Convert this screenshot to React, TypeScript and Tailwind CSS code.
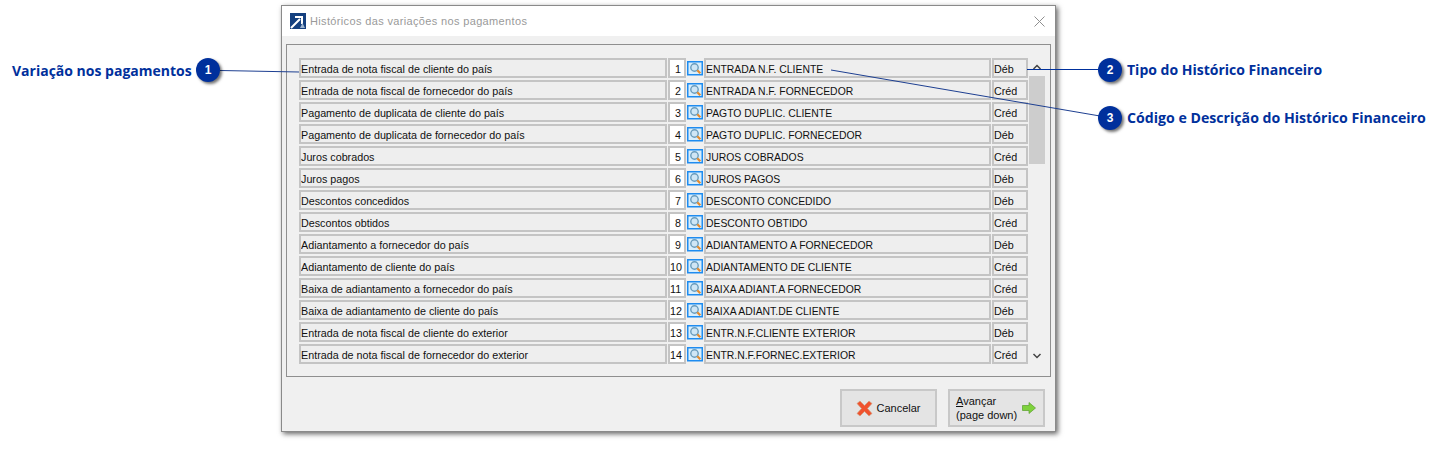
const rows = [
  ["Entrada de nota fiscal de cliente do país", "1", "ENTRADA N.F. CLIENTE", "Déb"],
  ["Entrada de nota fiscal de fornecedor do país", "2", "ENTRADA N.F. FORNECEDOR", "Créd"],
  ["Pagamento de duplicata de cliente do país", "3", "PAGTO DUPLIC. CLIENTE", "Créd"],
  ["Pagamento de duplicata de fornecedor do país", "4", "PAGTO DUPLIC. FORNECEDOR", "Déb"],
  ["Juros cobrados", "5", "JUROS COBRADOS", "Créd"],
  ["Juros pagos", "6", "JUROS PAGOS", "Déb"],
  ["Descontos concedidos", "7", "DESCONTO CONCEDIDO", "Déb"],
  ["Descontos obtidos", "8", "DESCONTO OBTIDO", "Créd"],
  ["Adiantamento a fornecedor do país", "9", "ADIANTAMENTO A FORNECEDOR", "Déb"],
  ["Adiantamento de cliente do país", "10", "ADIANTAMENTO DE CLIENTE", "Créd"],
  ["Baixa de adiantamento a fornecedor do país", "11", "BAIXA ADIANT.A FORNECEDOR", "Créd"],
  ["Baixa de adiantamento de cliente do país", "12", "BAIXA ADIANT.DE CLIENTE", "Déb"],
  ["Entrada de nota fiscal de cliente do exterior", "13", "ENTR.N.F.CLIENTE EXTERIOR", "Déb"],
  ["Entrada de nota fiscal de fornecedor do exterior", "14", "ENTR.N.F.FORNEC.EXTERIOR", "Créd"],
];

function LookupIcon() {
  return (
    <svg width="17" height="16" viewBox="0 0 17 16" className="shrink-0">
      <rect x="0.75" y="1.75" width="14.5" height="13" fill="#d8eefc" stroke="#1e8cf0" strokeWidth="1.5" />
      <circle cx="7.5" cy="7.5" r="3.7" fill="#cfe6f5" stroke="#6a9cbc" strokeWidth="1.4" />
      <path d="M10.3 10.3l3 3" stroke="#e58a2c" strokeWidth="2.2" />
    </svg>
  );
}

function Badge({ n, className }: { n: string; className: string }) {
  return (
    <div
      className={`absolute w-[24px] h-[24px] rounded-full bg-[#00309c] text-white text-[12px] font-bold flex items-center justify-center shadow-[2px_2px_3px_rgba(0,0,0,0.55)] ${className}`}
    >
      {n}
    </div>
  );
}

export default function App() {
  return (
    <div className="relative w-[1442px] h-[449px] bg-white overflow-hidden font-['Liberation_Sans',sans-serif]">
      {/* dialog */}
      <div className="ml-[281px] w-[775px] pt-[5px]">
        <div className="h-[427px] bg-[#f0f0f0] border border-[#8a8a8a] shadow-[2px_2px_5px_rgba(0,0,0,0.6)] flex flex-col">
          <div className="h-[30px] bg-white flex items-center pl-[8px] pr-[10px] shrink-0">
            <svg width="16" height="16" viewBox="0 0 16 16" className="shrink-0">
              <rect width="16" height="16" fill="#15407f" />
              <path d="M1 15L10 6M5 4h7v7" stroke="#fff" strokeWidth="2" fill="none" />
              <path d="M10 15l2.5-5 2.5 5z" fill="#9db4d0" />
            </svg>
            <span className="ml-[4px] text-[11px] tracking-[0.35px] text-[#9a9a9a]">Históricos das variações nos pagamentos</span>
            <svg width="11" height="11" viewBox="0 0 11 11" className="ml-auto">
              <path d="M0.5 0.5l10 10M10.5 0.5l-10 10" stroke="#8f8f8f" strokeWidth="1" />
            </svg>
          </div>

          <div className="mx-[4px] mt-[8px] h-[333px] border border-[#8f8f8f] flex pl-[12px] pt-[13px] pr-[3px] shrink-0">
            <div className="flex flex-col gap-[2px] w-[729px] shrink-0 text-[10.75px] text-[#111]">
              {rows.map((r) => (
                <div key={r[1]} className="flex h-[20px] shrink-0 leading-[19px]">
                  <div className="w-[368px] border-2 border-[#c4c4c4] bg-[#eeeeee] truncate">{r[0]}</div>
                  <div className="w-[18px] ml-[1px] border-2 border-[#c4c4c4] bg-white text-right pr-[3px]">{r[1]}</div>
                  <div className="w-[18px] flex items-center pl-[1px]"><LookupIcon /></div>
                  <div className="w-[287px] border-2 border-[#c4c4c4] bg-[#eeeeee] truncate text-[10.4px]">{r[2]}</div>
                  <div className="w-[36px] ml-[1px] border-2 border-[#c4c4c4] bg-[#eeeeee]">{r[3]}</div>
                </div>
              ))}
            </div>
            <div className="w-[16px] ml-[1px] flex flex-col items-center h-[306px]">
              <svg width="10" height="18" viewBox="0 0 10 18" className="shrink-0">
                <path d="M1.5 11L5 7.5 8.5 11" stroke="#444" strokeWidth="1.5" fill="none" />
              </svg>
              <div className="w-[16px] h-[88px] bg-[#cdcdcd]" />
              <svg width="10" height="16" viewBox="0 0 10 16" className="mt-auto shrink-0">
                <path d="M1.5 6L5 9.5 8.5 6" stroke="#444" strokeWidth="1.5" fill="none" />
              </svg>
            </div>
          </div>

          <div className="flex justify-end gap-[11px] pr-[10px] pt-[12px] text-[11px] text-[#111]">
            <div className="w-[97px] h-[38px] border-2 border-[#c8c8c8] bg-[#e4e4e4] flex items-center justify-center gap-[3px]">
              <svg width="17" height="17" viewBox="0 0 17 17">
                <path d="M1 3.5L4 1l4.5 4.5L13 1l3 2.5-4.5 5 4.5 5-3 2.5-4.5-4.5L4 16l-3-2.5 4.5-5z" fill="#f0522e" stroke="#d0a080" strokeWidth="0.7" />
              </svg>
              <span>Cancelar</span>
            </div>
            <div className="w-[97px] h-[38px] border-2 border-[#c8c8c8] bg-[#e4e4e4] flex items-center pl-[6px] gap-[5px] leading-[14px]">
              <span>
                <span className="underline">A</span>vançar<br />(page down)
              </span>
              <svg width="14" height="12" viewBox="0 0 14 12" className="shrink-0">
                <path d="M0.5 3.5h6.5V0.5L13.5 6 7 11.5v-3H0.5z" fill="#7ed23c" stroke="#5a9e2c" strokeWidth="0.7" />
              </svg>
            </div>
          </div>
        </div>
      </div>

      {/* callouts */}
      <svg width="1442" height="449" className="absolute inset-0 pointer-events-none">
        <path d="M220 70.5L299 72" stroke="#1d3f91" strokeWidth="1" fill="none" />
        <path d="M1027 69.5H1100" stroke="#00309c" strokeWidth="1" fill="none" />
        <path d="M831 70L1100 116" stroke="#1d3f91" strokeWidth="1" fill="none" />
      </svg>
      <span className="absolute left-[12px] top-[61px] text-[14px] leading-[20px] font-bold text-[#00309c] font-['Open_Sans',sans-serif]">Variação nos pagamentos</span>
      <Badge n="1" className="left-[196px] top-[58px]" />
      <Badge n="2" className="left-[1098px] top-[58px]" />
      <span className="absolute left-[1127px] top-[60px] text-[14px] leading-[20px] font-bold text-[#00309c] font-['Open_Sans',sans-serif]">Tipo do Histórico Financeiro</span>
      <Badge n="3" className="left-[1098px] top-[106px]" />
      <span className="absolute left-[1127px] top-[108px] text-[14.15px] leading-[20px] font-bold text-[#00309c] font-['Open_Sans',sans-serif]">Código e Descrição do Histórico Financeiro</span>
    </div>
  );
}
